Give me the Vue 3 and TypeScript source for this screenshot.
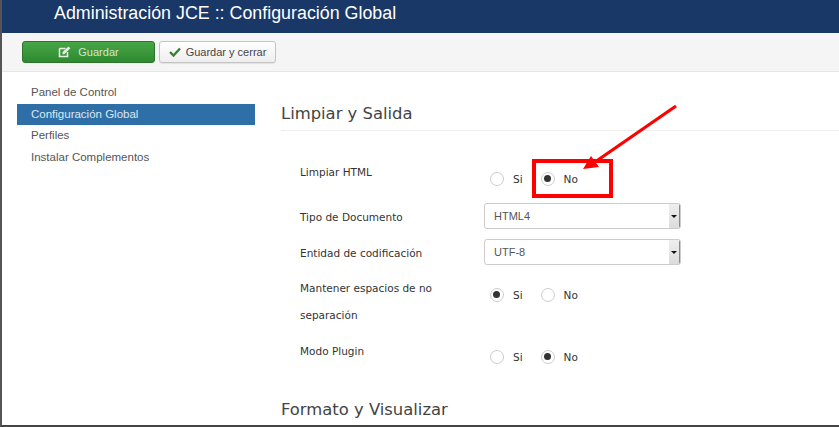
<script setup lang="ts">
interface Row { label: string; type: 'radio' | 'select'; value: string; cls: string }
const nav = ['Panel de Control', 'Configuración Global', 'Perfiles', 'Instalar Complementos']
const rows: Row[] = [
  { label: 'Limpiar HTML', type: 'radio', value: 'No', cls: 'r1' },
  { label: 'Tipo de Documento', type: 'select', value: 'HTML4', cls: 'r2' },
  { label: 'Entidad de codificación', type: 'select', value: 'UTF-8', cls: 'r3' },
  { label: 'Mantener espacios de no separación', type: 'radio', value: 'Si', cls: 'r4' },
  { label: 'Modo Plugin', type: 'radio', value: 'No', cls: 'r5' },
]
</script>

<template>
  <div class="page">
    <header class="title">Administración JCE :: Configuración Global</header>
    <div class="toolbar">
      <button class="btn green">
        <svg width="13" height="12" viewBox="0 0 13 12"><path d="M1.500 2.500h6M1.500 2.500v8h8V6" fill="none" stroke="#e6f1e6" stroke-width="1.600"/><path d="M4.500 6l6-5.500 1.800 1.800-6 6H4.500z" fill="#e6f1e6"/></svg>
        <span>Guardar</span>
      </button>
      <button class="btn plain">
        <svg width="12" height="10" viewBox="0 0 12 10"><path d="M1 5l3.500 3.500L11 1.500" fill="none" stroke="#378137" stroke-width="2.400"/></svg>
        <span>Guardar y cerrar</span>
      </button>
    </div>
    <div class="body">
      <nav class="nav">
        <a v-for="(n, i) in nav" :key="n" :class="{ active: i === 1 }">{{ n }}</a>
      </nav>
      <main class="main">
        <h2 class="h first">Limpiar y Salida</h2>
        <div v-for="r in rows" :key="r.label" class="row" :class="r.cls">
          <label class="lab">{{ r.label }}</label>
          <div v-if="r.type === 'radio'" class="radios">
            <span class="opt"><i class="dot" :class="{ on: r.value === 'Si' }"></i>Si</span>
            <span class="opt"><i class="dot" :class="{ on: r.value === 'No' }"></i>No</span>
          </div>
          <div v-else class="sel">
            <span>{{ r.value }}</span>
            <b class="arrow"></b>
          </div>
        </div>
        <h2 class="h second">Formato y Visualizar</h2>
      </main>
    </div>
    <div class="callout"></div>
    <svg class="pointer" width="110" height="80" viewBox="0 0 110 80">
      <path d="M94 4L13 60" stroke="#f00" stroke-width="3.200" fill="none"/>
      <path d="M1 67L9 54L17 65z" fill="#f00"/>
    </svg>
  </div>
</template>

<style scoped>
.page {
  position: relative;
  width: 839px;
  height: 427px;
  box-sizing: border-box;
  overflow: hidden;
  background: #fff;
  border-left: 2px solid #555;
  border-bottom: 2px solid #444;
  font-family: "Liberation Sans", Arial, sans-serif;
  color: #555;
}
.title {
  height: 33px;
  background: #1a3867;
  color: #fff;
  font-size: 17.850px;
  line-height: 26px;
  padding-left: 52px;
}
.toolbar {
  height: 39px;
  box-sizing: border-box;
  background: #f5f5f5;
  border-bottom: 1px solid #e6e6e6;
  display: flex;
  gap: 4px;
  padding: 8px 0 0 20px;
}
.btn {
  height: 22px;
  padding: 0;
  box-sizing: border-box;
  border-radius: 3px;
  font: 11px "Liberation Sans", Arial, sans-serif;
  display: flex;
  align-items: center;
  justify-content: center;
}
.green {
  width: 133px;
  gap: 7px;
  background: linear-gradient(#46a546, #2f8a2f);
  border: 1px solid #2a752a;
  color: #d3e6d1;
}
.plain {
  width: 117px;
  gap: 5px;
  background: linear-gradient(#fff, #eee);
  border: 1px solid #c4c4c4;
  color: #444;
  box-shadow: 0 1px 1px rgba(0, 0, 0, .08);
}
.body {
  display: flex;
}
.nav {
  width: 238px;
  margin: 10px 0 0 15px;
  font-size: 11.500px;
  flex: none;
}
.nav a {
  display: block;
  height: 21.500px;
  line-height: 21.500px;
  padding-left: 14px;
  color: #555;
}
.nav a.active {
  background: #2f6fa8;
  color: #dbe8f3;
}
.main {
  flex: 1;
  margin-left: 26px;
  font-family: "DejaVu Sans", Verdana, sans-serif;
  font-size: 10.500px;
  color: #333;
}
.h {
  margin: 0;
  font-weight: 400;
  font-size: 16.400px;
  color: #444;
  line-height: 20px;
}
.first {
  padding: 32px 0 6px;
  border-bottom: 1px solid #eee;
}
.second {
  margin-top: 32px;
}
.row {
  display: flex;
  padding-left: 19px;
}
.lab {
  width: 184px;
  flex: none;
  line-height: 27px;
  padding-right: 20px;
  box-sizing: border-box;
}
.r1 { padding-top: 28px; height: 44px; }
.r2 { height: 36px; }
.r3 { height: 36px; }
.r2 .lab, .r3 .lab { line-height: 29px; }
.r4 { height: 63px; }
.r5 { height: 30px; }
.radios {
  display: flex;
  gap: 18px;
  padding: 13px 0 0 6px;
  line-height: 14px;
}
.r5 .radios { padding-top: 12px; }
.opt {
  display: flex;
  align-items: center;
  gap: 9px;
  height: 14px;
  font-weight: 400;
  color: #333;
}
.dot {
  width: 14px;
  height: 14px;
  border-radius: 50%;
  box-sizing: border-box;
  border: 1.500px solid #cdcdcd;
  background: #fff;
  position: relative;
  display: block;
}
.dot.on::after {
  content: "";
  position: absolute;
  left: 2px;
  top: 2px;
  width: 7px;
  height: 7px;
  border-radius: 50%;
  background: #333;
}
.sel {
  width: 197px;
  height: 26px;
  box-sizing: border-box;
  border: 1px solid #ccc;
  border-radius: 3px;
  display: flex;
  align-items: center;
  justify-content: space-between;
  padding-left: 9px;
  color: #555;
  font-family: "Liberation Sans", Arial, sans-serif;
  font-size: 11px;
  overflow: hidden;
}
.arrow {
  width: 10px;
  height: 24px;
  background: linear-gradient(#eee, #dcdcdc);
  border-right: 1px solid #888;
  position: relative;
}
.arrow::after {
  content: "";
  position: absolute;
  left: 2px;
  top: 11px;
  border-left: 3px solid transparent;
  border-right: 3px solid transparent;
  border-top: 3px solid #111;
}
.callout {
  position: absolute;
  left: 530px;
  top: 159px;
  width: 81px;
  height: 39px;
  box-sizing: border-box;
  border: 4px solid #f00;
}
.pointer {
  position: absolute;
  left: 580px;
  top: 102px;
}
</style>
